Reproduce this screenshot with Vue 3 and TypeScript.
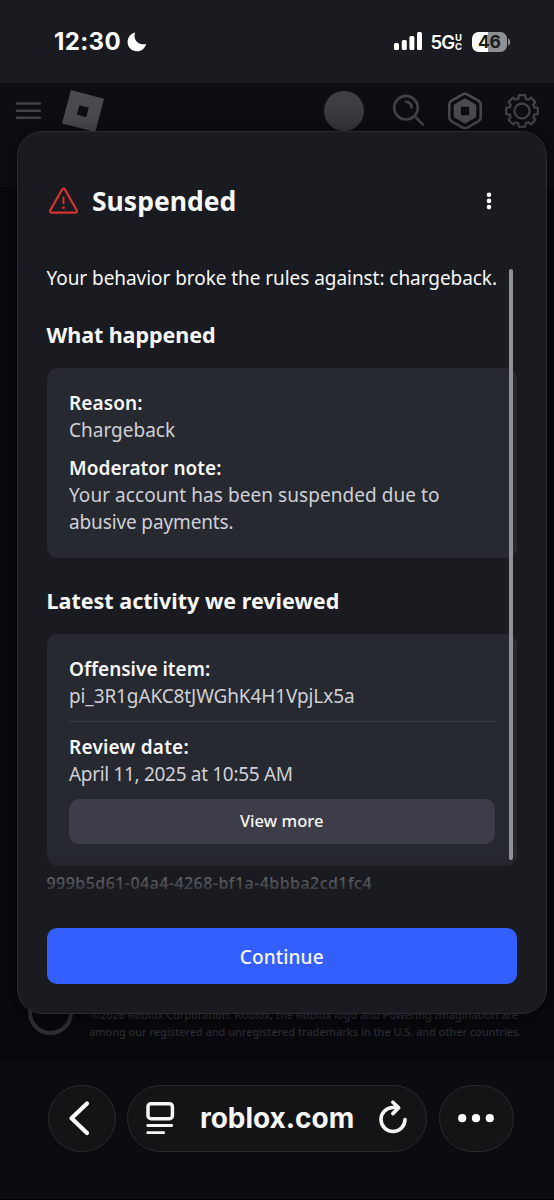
<script setup lang="ts">
interface Line {
  text: string
  cls: string
}

interface Entry {
  label: string
  labelCls: string
  lines: Line[]
}

const reasonEntries: Entry[] = [
  {
    label: 'Reason:',
    labelCls: 'b-reason',
    lines: [{ text: 'Chargeback', cls: 'l-charge' }],
  },
  {
    label: 'Moderator note:',
    labelCls: 'b-note',
    lines: [
      { text: 'Your account has been suspended due to', cls: 'l-account' },
      { text: 'abusive payments.', cls: 'l-abusive' },
    ],
  },
]

// Outline of an eight-toothed gear centred in a 40x40 box.
const gearPath = (() => {
  const pts: string[] = []
  const tooth = [
    [-3.7, -12.3],
    [-3.1, -15.8],
    [3.1, -15.8],
    [3.7, -12.3],
  ]
  for (let i = 0; i < 8; i++) {
    const a = (i * Math.PI) / 4
    for (const [x, y] of tooth) {
      const px = 20 + x * Math.cos(a) - y * Math.sin(a)
      const py = 20 + x * Math.sin(a) + y * Math.cos(a)
      pts.push(`${px.toFixed(2)} ${py.toFixed(2)}`)
    }
  }
  return `M${pts.join('L')}Z`
})()
</script>

<template>
  <div class="screen">
    <header class="status">
      <div class="clock">
        <span class="time">12:30</span>
        <svg class="moon" viewBox="0 0 20 20"><path d="M8.100.6C6.500 5 8.300 9.300 11.700 11.200C14.200 12.600 16.900 12.500 19.200 11.700C18.200 16.200 14.400 19.300 9.900 19.300C4.700 19.300.6 15.200.6 10C.6 5.500 3.800 1.500 8.100.6Z" fill="#fff" /></svg>
      </div>
      <div class="signals">
        <svg class="bars" viewBox="0 0 29 19" fill="#fff"><rect x="0" y="11" width="5" height="7" rx="1.500" /><rect x="7.800" y="8" width="5" height="10" rx="1.500" /><rect x="15.400" y="4" width="5" height="14" rx="1.500" /><rect x="23" y="0" width="5" height="18" rx="1.500" /></svg>
        <span class="five">5G</span>
        <span class="uc"><span>U</span><span>C</span></span>
        <span class="battery"><span>46</span></span>
        <svg class="nub" viewBox="0 0 3 8"><path d="M0 .5C3 1.500 3 6.500 0 7.500Z" fill="#88898d" /></svg>
      </div>
    </header>

    <nav class="nav">
      <svg class="menu" viewBox="0 0 26 18" stroke="#424247" stroke-width="2.500" stroke-linecap="round"><path d="M1.800 1.600H24.900M1.800 8.700H24.900M1.800 15.800H24.900" /></svg>
      <svg class="logo" viewBox="0 0 44 44"><path fill="#4a4a4f" fill-rule="evenodd" d="M9 1L42 9.700L33.300 43L0 34.500ZM17.500 16.200L14.800 25.600L24.200 28.200L26.800 18.800Z" /></svg>
      <span class="avatar"></span>
      <svg class="search" viewBox="0 0 34 34" fill="none" stroke="#424247" stroke-width="2.600" stroke-linecap="round"><circle cx="14" cy="13.700" r="11.800" /><path d="M22.800 22.300L30.800 30.500M14 7.800Q19.300 8.200 19.600 13.500" /></svg>
      <svg class="robux" viewBox="0 0 36 38"><path d="M15.700 2.300Q18 1.200 20.300 2.300L31.500 8.700Q33.700 10.100 33.700 12.500V25.500Q33.700 27.900 31.500 29.300L20.300 35.700Q18 36.800 15.700 35.700L4.500 29.300Q2.300 27.900 2.300 25.500V12.500Q2.300 10.100 4.500 8.700Z" fill="none" stroke="#4a4a4f" stroke-width="2.500" /><path d="M17 6.800Q18 6.300 19 6.800L28.300 12.200Q29.200 12.800 29.200 13.800V24.200Q29.200 25.200 28.300 25.800L19 31.200Q18 31.700 17 31.200L7.700 25.800Q6.800 25.200 6.800 24.200V13.800Q6.800 12.800 7.700 12.200ZM13.800 14.800V23.200H22.200V14.800Z" fill="#4a4a4f" fill-rule="evenodd" /></svg>
      <svg class="gear" viewBox="0 0 40 40" fill="none" stroke="#424247" stroke-width="2.300" stroke-linejoin="round"><path :d="gearPath" /><circle cx="20" cy="20" r="7.500" /></svg>
    </nav>

    <footer class="legal">
      <span class="ring"></span>
      <p>
        <span class="f1">©2026 Roblox Corporation. Roblox, the Roblox logo and Powering Imagination are</span>
        <span class="f2">among our registered and unregistered trademarks in the U.S. and other countries.</span>
      </p>
    </footer>

    <section class="modal">
      <div class="head">
        <svg class="warn" viewBox="0 0 32 28" fill="none" stroke="#d8322c" stroke-width="2.200" stroke-linejoin="round" stroke-linecap="round"><path d="M14.100 2.500Q15.500 .5 16.900 2.500L28.700 23.300Q29.600 25.400 27.500 25.600H3.500Q1.400 25.400 2.300 23.300Z" /><path d="M15.500 10.500V16.200" stroke-width="2" /><circle cx="15.500" cy="20.700" r="1.400" fill="#d8322c" stroke="none" /></svg>
        <h1>Suspended</h1>
        <svg class="kebab" viewBox="0 0 6 18" fill="#fff"><circle cx="3" cy="2.700" r="2.300" /><circle cx="3" cy="8.900" r="2.300" /><circle cx="3" cy="15.100" r="2.300" /></svg>
      </div>
      <div class="body">
        <p class="intro">Your behavior broke the rules against: chargeback.</p>
        <h2 class="t-what">What happened</h2>
        <div class="card">
          <div v-for="e in reasonEntries" :key="e.label" class="entry">
            <b :class="e.labelCls">{{ e.label }}</b>
            <span v-for="l in e.lines" :key="l.cls" :class="l.cls">{{ l.text }}</span>
          </div>
        </div>
        <h2 class="t-latest">Latest activity we reviewed</h2>
        <div class="card">
          <div class="entry"><b>Offensive item:</b><span class="l-pi">pi_3R1gAKC8tJWGhK4H1VpjLx5a</span></div>
          <hr />
          <div class="entry"><b class="b-date">Review date:</b><span class="l-april">April 11, 2025 at 10:55 AM</span></div>
          <button class="more">View more</button>
        </div>
        <p class="hash">999b5d61-04a4-4268-bf1a-4bbba2cd1fc4</p>
        <span class="fade"></span>
        <span class="thumb"></span>
      </div>
      <button class="continue">Continue</button>
    </section>

    <div class="toolbar">
      <span class="glass back"><svg viewBox="0 0 68 68" fill="none" stroke="#fff" stroke-width="4.200" stroke-linecap="round" stroke-linejoin="round"><path d="M39 19.500L23.500 34.200L39 49" /></svg></span>
      <span class="glass url">
        <svg class="reader" viewBox="0 0 28 34" fill="none" stroke="#f5f5f5" stroke-linecap="round"><rect x="2" y="2.700" width="24.400" height="15" rx="3" stroke-width="3.500" /><path d="M1.700 24.500H25.700M1.700 31.700H17.700" stroke-width="2.800" /></svg>
        <span class="domain">roblox.com</span>
        <svg class="reload" viewBox="0 0 30 36" fill="none" stroke="#f5f5f5" stroke-width="3.600" stroke-linecap="round" stroke-linejoin="round"><path d="M27 20.500A12 12 0 1 1 15 8.500H20.500M14.800 3.200L20.700 8.800L14.800 14.600" /></svg>
      </span>
      <span class="glass dots"><svg viewBox="0 0 76 68" fill="#fff"><circle cx="23.200" cy="34.200" r="4.100" /><circle cx="37" cy="34.200" r="4.100" /><circle cx="50.800" cy="34.200" r="4.100" /></svg></span>
    </div>
  </div>
</template>

<style>
body {
  background: #09090e;
}
</style>

<style scoped>
.screen {
  position: relative;
  box-sizing: border-box;
  width: 554px;
  height: 1200px;
  overflow: hidden;
  display: flex;
  flex-direction: column;
  background: #08080d;
  color: #f7f7f8;
  font-family: 'Noto Sans', sans-serif;
}
svg {
  display: block;
  flex: none;
  overflow: visible;
}
h1,
h2,
p {
  margin: 0;
  white-space: nowrap;
}
span {
  white-space: nowrap;
}
.status {
  flex: none;
  height: 83px;
  box-sizing: border-box;
  padding: 0 43px 0 54px;
  display: flex;
  justify-content: space-between;
  align-items: center;
  background: #1a1b20;
  font-family: Inter, sans-serif;
  color: #fff;
}
.clock,
.signals {
  display: flex;
  align-items: center;
}
.time {
  width: 73px;
  font-size: 24px;
  line-height: 28px;
  font-weight: 700;
  letter-spacing: 0.37px;
}
.moon {
  width: 20px;
  height: 20px;
}
.bars {
  width: 29px;
  height: 19px;
}
.five {
  width: 24.500px;
  margin-left: 8px;
  font-size: 18.500px;
  line-height: 22px;
  font-weight: 600;
  letter-spacing: -1px;
}
.uc {
  display: grid;
  grid-template-rows: 9px 9px;
  width: 16.500px;
  font-size: 9.500px;
  line-height: 9px;
  font-weight: 700;
}
.battery {
  display: grid;
  place-items: center;
  width: 35.500px;
  height: 20px;
  border-radius: 6.500px;
  background: linear-gradient(90deg, #fff 16px, #8e8f93 16px);
  color: #1a1b20;
  font-size: 17.500px;
  line-height: 20px;
  font-weight: 700;
  letter-spacing: -0.3px;
}
.nub {
  width: 3px;
  height: 8px;
  margin-left: 1px;
}
.nav {
  flex: none;
  height: 104px;
  box-sizing: border-box;
  padding: 0 12.500px 48px 15px;
  display: flex;
  align-items: center;
  background: #0d0d12;
}
.menu {
  width: 26px;
  height: 18px;
}
.logo {
  width: 44px;
  height: 44px;
  margin-left: 21px;
}
.avatar {
  width: 40px;
  height: 40px;
  margin-left: auto;
  border-radius: 50%;
  background: linear-gradient(#404045, #37373b);
}
.search {
  width: 34px;
  height: 34px;
  margin-left: 28px;
}
.robux {
  width: 36px;
  height: 38px;
  margin-left: 21px;
}
.gear {
  width: 40px;
  height: 40px;
  margin-left: 18.500px;
}
.legal {
  flex: none;
  margin-top: auto;
  height: 50px;
  padding-left: 28px;
  display: flex;
  color: #2c2c31;
}
.ring {
  box-sizing: border-box;
  width: 45px;
  height: 45px;
  border: 4px solid #2d2d32;
  border-radius: 50%;
}
.legal p {
  display: grid;
  align-content: start;
  margin: 17px 0 0 16px;
  font-size: 11px;
  line-height: 16.500px;
  font-weight: 500;
}
.f1 {
  padding-left: 2px;
  letter-spacing: -0.065px;
}
.f2 {
  letter-spacing: -0.068px;
}
.toolbar {
  flex: none;
  margin-top: 22px;
  height: 138px;
  box-sizing: border-box;
  padding: 22.500px 0 0 48px;
  display: flex;
  background: #0b0b10;
  border-bottom: 1px solid #000;
}
.glass {
  box-sizing: border-box;
  height: 67.500px;
  border: 1px solid #2b2b2d;
  border-radius: 34px;
  background: #141416;
  display: flex;
  align-items: center;
}
.glass > svg {
  margin: -1px;
}
.back {
  width: 68px;
}
.back svg {
  width: 68px;
  height: 68px;
}
.url {
  width: 300px;
  margin-left: 11px;
  padding-left: 18px;
}
.dots {
  width: 75.500px;
  margin-left: 11.500px;
}
.dots svg {
  width: 76px;
  height: 68px;
}
.url .reader {
  width: 28px;
  height: 34px;
  margin: 0;
}
.domain {
  width: 155px;
  margin-left: 26px;
  font-family: Inter, sans-serif;
  font-size: 28px;
  line-height: 34px;
  font-weight: 700;
  letter-spacing: -0.03px;
}
.url .reload {
  width: 30px;
  height: 36px;
  margin: -3px 0 0 23px;
}
.modal {
  position: absolute;
  left: 17px;
  top: 131px;
  width: 530px;
  height: 883px;
  box-sizing: border-box;
  border: 1px solid #2a2b30;
  border-radius: 25px;
  background: #1a1b20;
  padding: 0 29px 29px 28.500px;
  display: flex;
  flex-direction: column;
  box-shadow: 0 0 20px #0006;
}
.head {
  flex: none;
  height: 132px;
  padding-top: 6px;
  box-sizing: border-box;
  display: flex;
  align-items: center;
}
.warn {
  width: 32px;
  height: 28px;
  margin-left: 1px;
}
h1 {
  margin-left: 12.500px;
  font-size: 26.500px;
  line-height: 36px;
  font-weight: 700;
}
.kebab {
  width: 6px;
  height: 18px;
  margin: 0 25px 0 auto;
}
.body {
  position: relative;
  flex: 1;
  min-height: 0;
}
.intro {
  padding-top: 0.500px;
  font-size: 19px;
  line-height: 27px;
  letter-spacing: -0.057px;
}
h2 {
  margin: 29px 0 19.500px;
  font-size: 21.500px;
  line-height: 28px;
  font-weight: 700;
}
.t-what {
  letter-spacing: -0.07px;
}
.card {
  border-radius: 11px;
  background: #272930;
  padding: 21.500px 22.500px 22px;
}
.entry {
  display: flex;
  flex-direction: column;
  align-items: flex-start;
  font-size: 19px;
  line-height: 27px;
  color: #cfd0d6;
}
.entry + .entry {
  margin-top: 11px;
}
.entry b {
  color: #f7f7f8;
  font-weight: 600;
}
.b-reason {
  letter-spacing: 0.08px;
}
.b-note {
  letter-spacing: 0.04px;
}
.b-date {
  letter-spacing: 0.22px;
}
.l-account {
  letter-spacing: 0.058px;
}
.l-abusive {
  letter-spacing: -0.13px;
}
.l-pi {
  letter-spacing: -0.12px;
}
.l-april {
  letter-spacing: -0.32px;
}
hr {
  width: 100%;
  margin: 11px 0 12px;
  border: 0;
  height: 1.500px;
  background: #3a3b42;
}
button {
  display: flex;
  align-items: center;
  justify-content: center;
  width: 100%;
  box-sizing: border-box;
  padding: 0;
  border: 0;
  color: #f7f7f8;
  font-family: inherit;
}
.more {
  height: 45px;
  margin-top: 10.500px;
  padding-bottom: 2px;
  border-radius: 10px;
  background: #3c3d48;
  font-size: 16.500px;
  font-weight: 500;
  letter-spacing: 0.06px;
}
.hash {
  margin-top: 6px;
  font-size: 16px;
  line-height: 22px;
  font-weight: 500;
  letter-spacing: 0.449px;
  color: #b4b5b9;
}
.fade {
  position: absolute;
  left: 0;
  right: 0;
  top: 587px;
  height: 50px;
  background: linear-gradient(#1a1b2000, #1a1b20);
}
.thumb {
  position: absolute;
  right: 4px;
  top: 5px;
  width: 4px;
  height: 591px;
  border-radius: 2px;
  background: #919295;
}
.continue {
  flex: none;
  height: 56px;
  padding-top: 2px;
  border-radius: 10px;
  background: #335fff;
  font-size: 19px;
  font-weight: 500;
  letter-spacing: 0.15px;
}
</style>
